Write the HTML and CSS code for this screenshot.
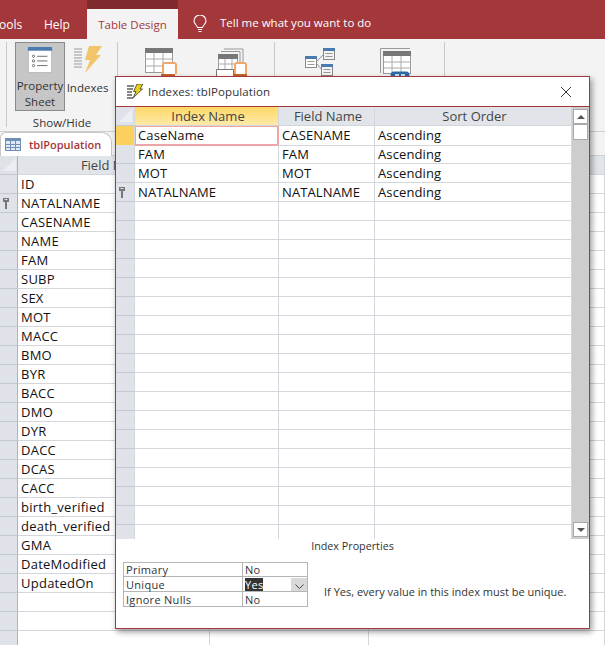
FILE: index.html
```html
<!DOCTYPE html>
<html lang="en">
<head>
<meta charset="utf-8">
<title>Indexes: tblPopulation</title>
<link rel="stylesheet" href="styles.css">
</head>
<body>
<div class="app">
  <div class="topbar">
    <span class="tab tab-cut">ools</span>
    <span class="tab tab-help">Help</span>
    <span class="tab tab-active">Table Design</span>
    <svg class="bulb" width="14" height="18" viewBox="0 0 14 18"><path d="M4.500 12.500C4 10 1 9 1 6a6 6 0 0 1 12 0c0 3-3 4-3.500 6.500zM5 14.500h4M5.500 16.500h3" fill="none" stroke="#fff" stroke-width="1.100"/></svg>
    <span class="tell">Tell me what you want to do</span>
  </div>
  <div class="ribbon">
    <div class="sep sep-first"></div>
    <div class="group group-show">
      <div class="group-tools">
        <div class="rbtn rbtn-on">
          <svg width="26" height="28" viewBox="0 0 26 28"><rect x=".5" y=".5" width="25" height="27" fill="#fff" stroke="#bbb"/><rect width="26" height="4" fill="#4a7ab0"/><g fill="none" stroke="#666"><circle cx="6" cy="10" r="1.200"/><circle cx="6" cy="15" r="1.200"/><circle cx="6" cy="20" r="1.200"/><path d="M10 10h11M10 15h11M10 20h11"/></g></svg>
          <span>Property<br>Sheet</span>
        </div>
        <div class="rbtn rbtn-index">
          <svg width="30" height="30" viewBox="0 0 30 30"><path d="M1 4h8M1 7h8M1 10h8M1 13h8M1 16h8M1 19h8M1 22h8" stroke="#999" fill="none"/><path d="M16 1h13l-6 9h5L12 28l5-13h-5z" fill="#f3c56b"/></svg>
          <span>Indexes</span>
        </div>
      </div>
      <div class="group-label">Show/Hide</div>
    </div>
    <div class="sep"></div>
    <div class="group group-macro">
      <svg width="32" height="30" viewBox="0 0 32 30"><rect x=".5" y=".5" width="27" height="24" fill="#fff" stroke="#999"/><rect width="28" height="5" fill="#777"/><path d="M0 11h28M0 18h28M9 5v20M18 5v20" stroke="#aaa" fill="none"/><path d="M17 17h12v9H17z" fill="#fff"/><path d="M18 28V17q0-2 2-2h9q2 0 2 2v9" fill="#fff" stroke="#f0a868" stroke-width="2"/><path d="M16 26h14v3H16z" fill="#c8602a"/></svg>
      <svg width="32" height="30" viewBox="0 0 32 30"><path d="M8 1h19v17M5 3.500h19V19" fill="none" stroke="#999"/><rect x="2.500" y="6.500" width="19" height="15" fill="#fff" stroke="#999"/><rect x="2" y="6" width="20" height="5" fill="#777"/><path d="M2 16h20M9 11v10M16 11v10" stroke="#aaa" fill="none"/><path d="M.5 21.500h17v7H.5z" fill="#fff" stroke="#777"/><path d="M19 28V17q0-2 2-2h7q2 0 2 2v9" fill="#fff" stroke="#f0a868" stroke-width="2"/><path d="M17 26h14v3H17z" fill="#c8602a"/></svg>
    </div>
    <div class="sep"></div>
    <div class="group group-rel">
      <svg width="32" height="30" viewBox="0 0 32 30"><path d="M12 13l7-7M12 16l5 6" stroke="#7a9cc0" fill="none"/><rect x=".5" y="8.500" width="11" height="11" fill="#fff" stroke="#888"/><rect y="8" width="12" height="3" fill="#4a7ab0"/><path d="M2.500 13.500h7M2.500 16.500h7M20.500 5.500h7M20.500 8.500h7M18.500 21.500h7M18.500 24.500h7" stroke="#999"/><rect x="18.500" y=".5" width="11" height="11" fill="none" stroke="#888"/><rect x="18" width="12" height="3" fill="#4a7ab0"/><rect x="16.500" y="16.500" width="11" height="11" fill="none" stroke="#888"/><rect x="16" y="16" width="12" height="3" fill="#4a7ab0"/></svg>
      <svg width="32" height="32" viewBox="0 0 32 32"><path d="M.5 25V.5H30" stroke="#999" fill="none"/><rect x="3.500" y="3.500" width="27" height="22" fill="#fff" stroke="#999"/><rect x="3" y="3" width="28" height="5" fill="#777"/><path d="M3 14h28M3 20h28M12 8v18M21 8v18" stroke="#aaa" fill="none"/><path d="M14 27h12" stroke="#2f6aa8" stroke-width="7" stroke-linecap="round"/><path d="M15 27h4M21 27h4" stroke="#fff" stroke-width="1.500"/></svg>
    </div>
    <div class="sep"></div>
  </div>
  <div class="doc-tabs">
    <div class="doc-tab">
      <svg width="16" height="13" viewBox="0 0 16 13"><rect x=".5" y=".5" width="15" height="12" fill="#dfe9f5" stroke="#6f8fb5"/><rect width="16" height="3" fill="#6f8fb5"/><path d="M0 6.500h16M0 9.500h16M5.500 3v10M10.500 3v10" stroke="#6f8fb5" fill="none"/></svg>
      <span>tblPopulation</span>
    </div>
  </div>
  <div class="design">
    <div class="d-row d-head"><div class="d-sel"><i class="corner"></i></div><div class="d-c1">Field Name</div><div class="d-c2"></div><div class="d-c3"></div></div>
    <div class="d-row"><div class="d-sel"></div><div class="d-c1">ID</div><div class="d-c2"></div><div class="d-c3"></div></div>
    <div class="d-row"><div class="d-sel"><svg class="key" width="6" height="11" viewBox="0 0 6 11"><path d="M0 0h6v4H4v7H2V4H0z" fill="#777"/><path d="M1.500 1.500h3" stroke="#ddd"/></svg></div><div class="d-c1">NATALNAME</div><div class="d-c2"></div><div class="d-c3"></div></div>
    <div class="d-row"><div class="d-sel"></div><div class="d-c1">CASENAME</div><div class="d-c2"></div><div class="d-c3"></div></div>
    <div class="d-row"><div class="d-sel"></div><div class="d-c1">NAME</div><div class="d-c2"></div><div class="d-c3"></div></div>
    <div class="d-row"><div class="d-sel"></div><div class="d-c1">FAM</div><div class="d-c2"></div><div class="d-c3"></div></div>
    <div class="d-row"><div class="d-sel"></div><div class="d-c1">SUBP</div><div class="d-c2"></div><div class="d-c3"></div></div>
    <div class="d-row"><div class="d-sel"></div><div class="d-c1">SEX</div><div class="d-c2"></div><div class="d-c3"></div></div>
    <div class="d-row"><div class="d-sel"></div><div class="d-c1">MOT</div><div class="d-c2"></div><div class="d-c3"></div></div>
    <div class="d-row"><div class="d-sel"></div><div class="d-c1">MACC</div><div class="d-c2"></div><div class="d-c3"></div></div>
    <div class="d-row"><div class="d-sel"></div><div class="d-c1">BMO</div><div class="d-c2"></div><div class="d-c3"></div></div>
    <div class="d-row"><div class="d-sel"></div><div class="d-c1">BYR</div><div class="d-c2"></div><div class="d-c3"></div></div>
    <div class="d-row"><div class="d-sel"></div><div class="d-c1">BACC</div><div class="d-c2"></div><div class="d-c3"></div></div>
    <div class="d-row"><div class="d-sel"></div><div class="d-c1">DMO</div><div class="d-c2"></div><div class="d-c3"></div></div>
    <div class="d-row"><div class="d-sel"></div><div class="d-c1">DYR</div><div class="d-c2"></div><div class="d-c3"></div></div>
    <div class="d-row"><div class="d-sel"></div><div class="d-c1">DACC</div><div class="d-c2"></div><div class="d-c3"></div></div>
    <div class="d-row"><div class="d-sel"></div><div class="d-c1">DCAS</div><div class="d-c2"></div><div class="d-c3"></div></div>
    <div class="d-row"><div class="d-sel"></div><div class="d-c1">CACC</div><div class="d-c2"></div><div class="d-c3"></div></div>
    <div class="d-row"><div class="d-sel"></div><div class="d-c1">birth_verified</div><div class="d-c2"></div><div class="d-c3"></div></div>
    <div class="d-row"><div class="d-sel"></div><div class="d-c1">death_verified</div><div class="d-c2"></div><div class="d-c3"></div></div>
    <div class="d-row"><div class="d-sel"></div><div class="d-c1">GMA</div><div class="d-c2"></div><div class="d-c3"></div></div>
    <div class="d-row"><div class="d-sel"></div><div class="d-c1">DateModified</div><div class="d-c2"></div><div class="d-c3"></div></div>
    <div class="d-row"><div class="d-sel"></div><div class="d-c1">UpdatedOn</div><div class="d-c2"></div><div class="d-c3"></div></div>
    <div class="d-row"><div class="d-sel"></div><div class="d-c1"></div><div class="d-c2"></div><div class="d-c3"></div></div>
    <div class="d-row"><div class="d-sel"></div><div class="d-c1"></div><div class="d-c2"></div><div class="d-c3"></div></div>
    <div class="d-row"><div class="d-sel"></div><div class="d-c1"></div><div class="d-c2"></div><div class="d-c3"></div></div>
  </div>
</div>

<div class="dialog">
  <div class="dlg-title">
    <svg width="16" height="15" viewBox="0 0 16 15"><path d="M0 2h7M0 5h6M0 8h5M0 11h5M0 14h6" stroke="#111" stroke-width="1.200" fill="none"/><path d="M10 0h6l-3 5h2.500L6 14l3-6.500H6.500z" fill="#e2d21c" stroke="#222" stroke-width=".7"/></svg>
    <span class="dlg-name">Indexes: tblPopulation</span>
    <svg class="dlg-close" width="12" height="12" viewBox="0 0 12 12"><path d="M1 1l10 10M11 1L1 11" stroke="#333" fill="none"/></svg>
  </div>
  <div class="ix-area">
    <div class="ix-grid">
      <div class="ix-row ix-head"><div class="ix-sel"><i class="corner"></i></div><div class="ix-c1 on">Index Name</div><div class="ix-c2">Field Name</div><div class="ix-c3">Sort Order</div></div>
      <div class="ix-row"><div class="ix-sel sel-on"></div><div class="ix-c1 cell-on">CaseName</div><div class="ix-c2">CASENAME</div><div class="ix-c3">Ascending</div></div>
      <div class="ix-row"><div class="ix-sel"></div><div class="ix-c1">FAM</div><div class="ix-c2">FAM</div><div class="ix-c3">Ascending</div></div>
      <div class="ix-row"><div class="ix-sel"></div><div class="ix-c1">MOT</div><div class="ix-c2">MOT</div><div class="ix-c3">Ascending</div></div>
      <div class="ix-row"><div class="ix-sel"><svg class="key" width="6" height="11" viewBox="0 0 6 11"><path d="M0 0h6v4H4v7H2V4H0z" fill="#777"/><path d="M1.500 1.500h3" stroke="#ddd"/></svg></div><div class="ix-c1">NATALNAME</div><div class="ix-c2">NATALNAME</div><div class="ix-c3">Ascending</div></div>
      <div class="ix-row"><div class="ix-sel"></div><div class="ix-c1"></div><div class="ix-c2"></div><div class="ix-c3"></div></div>
      <div class="ix-row"><div class="ix-sel"></div><div class="ix-c1"></div><div class="ix-c2"></div><div class="ix-c3"></div></div>
      <div class="ix-row"><div class="ix-sel"></div><div class="ix-c1"></div><div class="ix-c2"></div><div class="ix-c3"></div></div>
      <div class="ix-row"><div class="ix-sel"></div><div class="ix-c1"></div><div class="ix-c2"></div><div class="ix-c3"></div></div>
      <div class="ix-row"><div class="ix-sel"></div><div class="ix-c1"></div><div class="ix-c2"></div><div class="ix-c3"></div></div>
      <div class="ix-row"><div class="ix-sel"></div><div class="ix-c1"></div><div class="ix-c2"></div><div class="ix-c3"></div></div>
      <div class="ix-row"><div class="ix-sel"></div><div class="ix-c1"></div><div class="ix-c2"></div><div class="ix-c3"></div></div>
      <div class="ix-row"><div class="ix-sel"></div><div class="ix-c1"></div><div class="ix-c2"></div><div class="ix-c3"></div></div>
      <div class="ix-row"><div class="ix-sel"></div><div class="ix-c1"></div><div class="ix-c2"></div><div class="ix-c3"></div></div>
      <div class="ix-row"><div class="ix-sel"></div><div class="ix-c1"></div><div class="ix-c2"></div><div class="ix-c3"></div></div>
      <div class="ix-row"><div class="ix-sel"></div><div class="ix-c1"></div><div class="ix-c2"></div><div class="ix-c3"></div></div>
      <div class="ix-row"><div class="ix-sel"></div><div class="ix-c1"></div><div class="ix-c2"></div><div class="ix-c3"></div></div>
      <div class="ix-row"><div class="ix-sel"></div><div class="ix-c1"></div><div class="ix-c2"></div><div class="ix-c3"></div></div>
      <div class="ix-row"><div class="ix-sel"></div><div class="ix-c1"></div><div class="ix-c2"></div><div class="ix-c3"></div></div>
      <div class="ix-row"><div class="ix-sel"></div><div class="ix-c1"></div><div class="ix-c2"></div><div class="ix-c3"></div></div>
      <div class="ix-row"><div class="ix-sel"></div><div class="ix-c1"></div><div class="ix-c2"></div><div class="ix-c3"></div></div>
      <div class="ix-row"><div class="ix-sel"></div><div class="ix-c1"></div><div class="ix-c2"></div><div class="ix-c3"></div></div>
      <div class="ix-row"><div class="ix-sel"></div><div class="ix-c1"></div><div class="ix-c2"></div><div class="ix-c3"></div></div>
    </div>
    <div class="scroll">
      <div class="sb-btn"><i class="arrow-up"></i></div>
      <div class="sb-thumb"></div>
      <div class="sb-fill"></div>
      <div class="sb-btn"><i class="arrow-down"></i></div>
    </div>
  </div>
  <div class="props-title">Index Properties</div>
  <div class="props">
    <div class="p-table">
      <div class="p-row p-first"><div class="p-k">Primary</div><div class="p-v">No</div></div>
      <div class="p-row"><div class="p-k">Unique</div><div class="p-v"><span class="p-sel">Yes</span><span class="p-drop"><svg width="9" height="5" viewBox="0 0 9 5"><path d="M.5.500l4 4 4-4" fill="none" stroke="#444"/></svg></span></div></div>
      <div class="p-row"><div class="p-k">Ignore Nulls</div><div class="p-v">No</div></div>
    </div>
    <div class="p-help">If Yes, every value in this index must be unique.</div>
  </div>
</div>
</body>
</html>
```
FILE: styles.css
```css
* { box-sizing: border-box; }
html, body { margin: 0; padding: 0; }
body {
  width: 605px;
  height: 645px;
  overflow: hidden;
  position: relative;
  background: #fff;
  font-family: "Open Sans", "Noto Sans", sans-serif;
  color: #222;
}
.app { display: flex; flex-direction: column; height: 645px; overflow: hidden; }

.topbar {
  height: 39px;
  background: #a4373a;
  color: #fff;
  display: flex;
  align-items: flex-end;
  font-size: 11.500px;
  flex: none;
}
.tab { height: 30px; line-height: 31px; display: block; }
.tab-cut { width: 45px; margin-left: -1px; font-size: 12px; }
.tab-help { width: 43px; font-size: 12px; }
.tab-active {
  width: 91px;
  background: #f3f3f3;
  color: #a4373a;
  text-align: center;
  box-shadow: 0 -9px 0 #7f2a2d;
}
.bulb { margin: 0 0 6px 15px; }
.tell { margin: 0 0 0 13px; height: 31px; line-height: 30px; }

.ribbon {
  height: 93px;
  flex: none;
  background: #f3f3f3;
  border-bottom: 1px solid #cfcfcf;
  display: flex;
  align-items: flex-start;
  padding: 3px 0 0 6px;
}
.sep { width: 1px; height: 85px; background: #c8c8c8; flex: none; }
.group { flex: none; }
.group-show { width: 110px; padding-left: 8px; }
.group-tools { display: flex; }
.rbtn {
  display: flex;
  flex-direction: column;
  align-items: center;
  font-size: 11.500px;
  line-height: 16px;
  text-align: center;
  color: #333;
}
.rbtn-on {
  width: 50px;
  height: 69px;
  background: #c6c6c6;
  border: 1px solid #8a8a8a;
  padding-top: 4px;
}
.rbtn-on span { margin-top: 5px; }
.rbtn-index { width: 43px; margin-left: 1px; padding-top: 3px; }
.rbtn-index span { margin-top: 5px; }
.group-label { font-size: 11.500px; text-align: center; line-height: 16px; margin: 4px 0 0 0; width: 94px; color: #333; }
.group-macro { width: 156px; display: flex; padding: 6px 0 0 27px; gap: 39px; }
.group-rel { width: 169px; display: flex; padding: 6px 0 0 30px; gap: 43px; }

.doc-tabs { height: 24px; flex: none; background: #f3f3f3; border-bottom: 1px solid #cfcfcf; }
.doc-tab {
  width: 112px;
  height: 24px;
  background: #fff;
  border: 1px solid #c6c6c6;
  border-bottom: 0;
  border-radius: 6px 10px 0 0;
  display: flex;
  align-items: center;
  gap: 8px;
  padding-left: 4px;
  font-size: 11px;
  font-weight: 600;
  color: #a4373a;
}

.design { flex: none; }
.d-row { display: grid; grid-template-columns: 18px 192px 159px 1fr; height: 19px; font-size: 13px; line-height: 18px; }
.d-row > div { border-bottom: 1px solid #d3d7dc; border-right: 1px solid #d3d7dc; white-space: nowrap; overflow: hidden; }
.d-row > .d-sel { background: #dfe3e9; border-bottom-color: #c4c9d0; border-right-color: #aeb3ba; position: relative; }
.d-c1 { padding-left: 3px; letter-spacing: .25px; color: #111; }
.d-head > div { background: #e1e5ea; text-align: center; letter-spacing: 0; color: #444; }
.corner {
  position: absolute;
  left: 3px;
  bottom: 3px;
  width: 0;
  height: 0;
  border-left: 13px solid transparent;
  border-bottom: 13px solid #eceef2;
}
.key { display: block; margin: 4px 0 0 3px; }

.dialog {
  position: absolute;
  left: 115px;
  top: 76px;
  width: 475px;
  height: 553px;
  background: #fff;
  border: 1px solid #a4373a;
  box-shadow: 2px 3px 6px rgba(0,0,0,.4);
  display: flex;
  flex-direction: column;
}
.dlg-title { height: 29px; flex: none; display: flex; align-items: center; padding: 0 17px 0 11px; font-size: 11.500px; letter-spacing: .1px; color: #333; }
.dlg-name { margin-left: 5px; flex: 1; }
.ix-area { height: 433px; flex: none; display: flex; border-top: 1px solid #a4373a; }
.ix-grid { width: 456px; overflow: hidden; }
.ix-row { display: grid; grid-template-columns: 19px 144px 96px 197px; height: 19px; font-size: 13px; line-height: 18px; color: #111; }
.ix-row > div { border-bottom: 1px solid #d3d7dc; border-right: 1px solid #d3d7dc; padding-left: 3px; white-space: nowrap; letter-spacing: .12px; }
.ix-row > .ix-sel { background: #dfe3e9; border-bottom-color: #c4c9d0; padding: 0; position: relative; }
.ix-head > div { background: #e1e5ea; text-align: center; color: #444; }
.ix-row.ix-head > div { letter-spacing: 0; }
.ix-head > .on { background: linear-gradient(#ffd966, #fde9a9 ); }
.ix-row > .sel-on { background: #fbd05c; }
.ix-row > .cell-on { border: 1px solid #eda5a8; border-width: 1px 2px 2px 1px; line-height: 17px; padding-left: 2px; }

.scroll { width: 17px; background: #cdcdcd; display: flex; flex-direction: column; align-items: center; padding: 2px 0; }
.sb-btn { width: 15px; height: 15px; background: #fff; border: 1px solid #a9a9a9; display: flex; align-items: center; justify-content: center; flex: none; }
.sb-thumb { width: 15px; height: 16px; background: #fff; border: 1px solid #a9a9a9; flex: none; }
.sb-fill { flex: 1; }
.arrow-up { border: 4px solid transparent; border-top: 0; border-bottom: 4px solid #555; }
.arrow-down { border: 4px solid transparent; border-bottom: 0; border-top: 4px solid #555; }

.props-title { font-size: 10.750px; text-align: center; width: 473px; line-height: 15px; color: #333; }
.props { display: flex; align-items: center; padding: 8px 0 0 7px; }
.p-table { width: 185px; border: 1px solid #b5b5b5; border-bottom: 0; font-size: 11px; letter-spacing: .3px; line-height: 15px; color: #333; flex: none; }
.p-row { display: grid; grid-template-columns: 119px 1fr; height: 15px; border-bottom: 1px solid #b5b5b5; }
.p-first { height: 14px; line-height: 13px; }
.p-k { padding-left: 2px; border-right: 1px solid #b5b5b5; }
.p-v { padding-left: 2px; position: relative; }
.p-sel { background: #333; color: #fff; display: inline-block; height: 13px; line-height: 13px; margin-top: 1px; vertical-align: top; }
.p-drop { position: absolute; right: 0; top: 1px; width: 16px; height: 13px; background: #d9d9d9; display: flex; align-items: center; justify-content: center; padding-top: 3px; }
.p-help { font-size: 11px; margin: 14px 0 0 16px; color: #333; white-space: nowrap; }
```
